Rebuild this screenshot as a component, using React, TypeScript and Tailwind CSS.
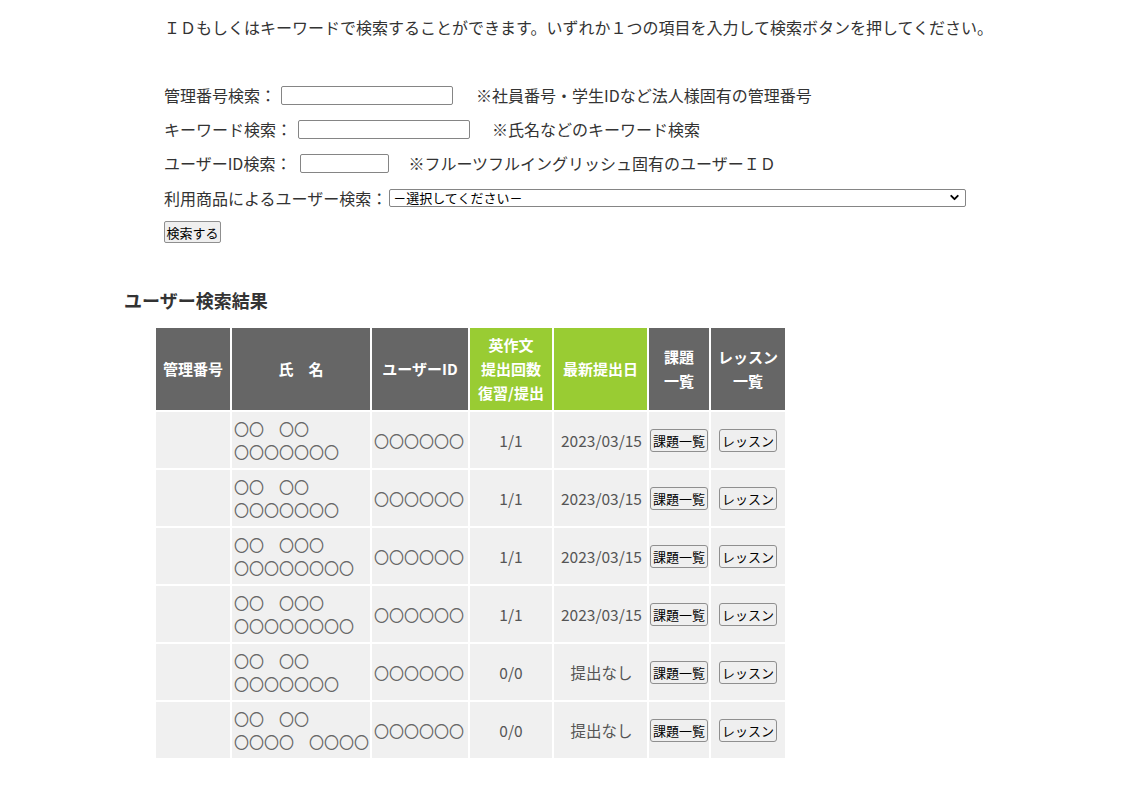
import { ChevronDown } from "lucide-react";

const font = { fontFamily: '"Noto Sans CJK JP", "Noto Sans", sans-serif' };

type Row = { name1: string; name2: string; count: string; date: string };

const rows: Row[] = [
  { name1: "〇〇　〇〇", name2: "〇〇〇〇〇〇〇", count: "1/1", date: "2023/03/15" },
  { name1: "〇〇　〇〇", name2: "〇〇〇〇〇〇〇", count: "1/1", date: "2023/03/15" },
  { name1: "〇〇　〇〇〇", name2: "〇〇〇〇〇〇〇〇", count: "1/1", date: "2023/03/15" },
  { name1: "〇〇　〇〇〇", name2: "〇〇〇〇〇〇〇〇", count: "1/1", date: "2023/03/15" },
  { name1: "〇〇　〇〇", name2: "〇〇〇〇〇〇〇", count: "0/0", date: "提出なし" },
  { name1: "〇〇　〇〇", name2: "〇〇〇〇　〇〇〇〇", count: "0/0", date: "提出なし" },
];

function Input({ w }: { w: string }) {
  return <input type="text" className={`${w} h-[19px] rounded-[2px] border border-[#858585] bg-white`} />;
}

function SmallButton({ children }: { children: React.ReactNode }) {
  return (
    <button className="h-[23px] rounded-[3px] border border-[#8f8f8f] bg-[#efefef] px-[2px] text-[13px] leading-none text-black">
      {children}
    </button>
  );
}

function Head({ children, green }: { children: React.ReactNode; green?: boolean }) {
  return (
    <div
      className={`flex h-[82px] items-center justify-center text-center text-[15px] font-bold leading-[24px] text-white ${
        green ? "bg-[#99cc33]" : "bg-[#666666]"
      }`}
    >
      {children}
    </div>
  );
}

export default function App() {
  return (
    <div className="min-h-[789px] bg-white text-[#333]" style={font}>
      <div className="pl-[164px] pt-[15px] text-[16px] leading-[24px]">
        ＩＤもしくはキーワードで検索することができます。いずれか１つの項目を入力して検索ボタンを押してください。
      </div>

      <div className="mt-[39px] flex flex-col pl-[164px] text-[16px]">
        <div className="flex h-[34px] items-center">
          <span className="mr-[5px]">管理番号検索：</span>
          <Input w="w-[172px]" />
          <span className="ml-[23px]">※社員番号・学生IDなど法人様固有の管理番号</span>
        </div>
        <div className="flex h-[34px] items-center">
          <span className="mr-[6px]">キーワード検索：</span>
          <Input w="w-[172px]" />
          <span className="ml-[22px]">※氏名などのキーワード検索</span>
        </div>
        <div className="flex h-[34px] items-center">
          <span className="mr-[9px]">ユーザーID検索：</span>
          <Input w="w-[89px]" />
          <span className="ml-[19px]">※フルーツフルイングリッシュ固有のユーザーＩＤ</span>
        </div>
        <div className="flex h-[35px] items-center">
          <span className="mr-[2px]">利用商品によるユーザー検索：</span>
          <div className="flex h-[18px] w-[577px] items-center justify-between rounded-[2px] border border-[#858585] bg-white pl-[3px] pr-[4px] text-[13px] leading-none text-black">
            <span>－選択してください－</span>
            <ChevronDown size={13} strokeWidth={3.5} />
          </div>
        </div>
        <div className="flex h-[34px] items-center">
          <button className="h-[22px] w-[57px] rounded-[2px] border border-[#8f8f8f] bg-[#efefef] text-[13px] leading-none text-black">
            検索する
          </button>
        </div>
      </div>

      <div className="mt-[38px] pl-[124px] text-[18px] font-bold leading-[26px] text-[#333]">ユーザー検索結果</div>

      <div className="ml-[156px] mt-[15px] grid w-fit grid-cols-[74px_138px_96px_82px_93px_60px_74px] gap-[2px]">
        <Head>管理番号</Head>
        <Head>氏　名</Head>
        <Head>ユーザーID</Head>
        <Head green>
          英作文
          <br />
          提出回数
          <br />
          復習/提出
        </Head>
        <Head green>最新提出日</Head>
        <Head>
          課題
          <br />
          一覧
        </Head>
        <Head>
          レッスン
          <br />
          一覧
        </Head>
        {rows.map((r, i) => (
          <div key={i} className="contents text-[15.5px] leading-[23px] text-[#555]">
            <div className="h-[56px] bg-[#f0f0f0]" />
            <div className="flex h-[56px] flex-col justify-center whitespace-nowrap bg-[#f0f0f0] pl-[2px] text-[15px] text-[#666]">
              <span>{r.name1}</span>
              <span>{r.name2}</span>
            </div>
            <div className="flex items-center justify-center bg-[#f0f0f0] pr-[2px] text-[15px] text-[#666]">〇〇〇〇〇〇</div>
            <div className="flex items-center justify-center bg-[#f0f0f0]">{r.count}</div>
            <div className="flex items-center justify-center whitespace-nowrap bg-[#f0f0f0] pl-[2px]">{r.date}</div>
            <div className="flex items-center justify-center bg-[#f0f0f0]">
              <SmallButton>課題一覧</SmallButton>
            </div>
            <div className="flex items-center justify-center bg-[#f0f0f0]">
              <SmallButton>レッスン</SmallButton>
            </div>
          </div>
        ))}
      </div>
    </div>
  );
}
